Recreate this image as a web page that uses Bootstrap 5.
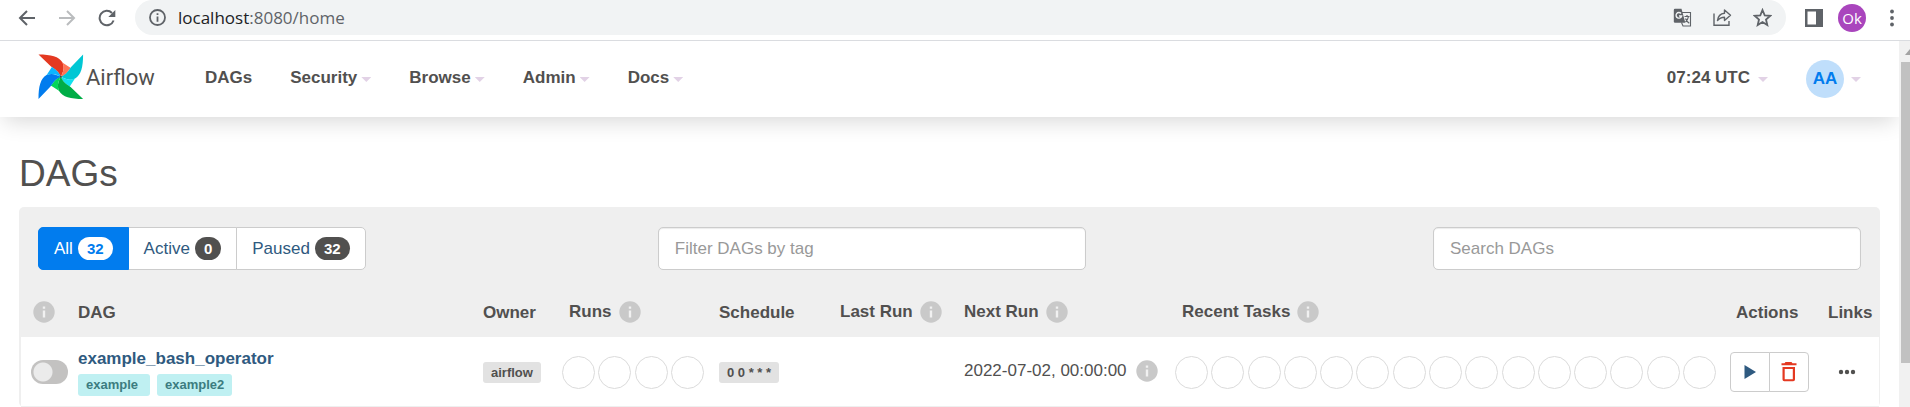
<!DOCTYPE html>
<html lang="en">
<head>
<meta charset="utf-8">
<meta name="viewport" content="width=device-width, initial-scale=1">
<title>DAGs - Airflow</title>
<link rel="stylesheet" href="https://cdn.jsdelivr.net/npm/bootstrap@5.3.0/dist/css/bootstrap.min.css">
<style>
  :root { --ink: #51504f; --blue: #017cee; --panel: #efefef; --rule: #cccccc; --link: #2f5a80; }
  html, body { height: 100%; }
  body { font-family: "Liberation Sans", Arial, sans-serif; font-size: 17px; line-height: 24px; color: var(--ink); background: #fff; overflow: hidden; }
  svg { display: block; flex: none; }

  /* browser toolbar */
  .chrome-bar { height: 41px; padding-bottom: 5px; border-bottom: 1px solid #dadce0; flex: none; }
  .chrome-btn { border: 0; background: none; padding: 0; width: 40px; height: 32px; display: flex; align-items: center; justify-content: center; color: #5f6368; }
  .chrome-nav { padding-left: 7px; }
  .address { background: #f1f3f4; border-radius: 18px; height: 35px; padding-left: 14px; }
  .url { font-family: "Open Sans", "Noto Sans", sans-serif; font-size: 17px; color: #5f6368; }
  .url b { font-weight: 400; color: #202124; }
  .profile { width: 28px; height: 28px; background: #a945bd; color: #fff; font-family: "Open Sans", sans-serif; font-size: 15px; line-height: 28px; }

  /* page and its scrollbar */
  .page { min-width: 0; overflow: hidden; }
  .scroll-track { width: 11px; background: #f1f1f1; padding: 8px 0 0 2px; }
  .scroll-thumb { background: #c1c1c1; height: 84%; margin-top: 7px; }

  .top-nav { height: 76px; padding: 0 38px 2px; background: #fff; box-shadow: 0 8px 22px -4px rgba(0, 0, 0, .16); }
  .brand { color: var(--ink); font-family: Roboto, sans-serif; font-size: 22px; gap: 2px; width: 148px; }
  .brand svg { margin-bottom: 2px; }
  .top-nav .nav-link { color: var(--ink); font-weight: 700; padding: 0 19px; display: flex; align-items: center; gap: 4px; }
  .tri { width: 10px; height: 5px; background: #e2d2e6; clip-path: polygon(0 0, 100% 0, 50% 100%); margin-top: 3px; }
  .avatar { width: 38px; height: 38px; line-height: 38px; font-size: 17px; background: #bfdefb; color: var(--blue); margin: 2px 3px 0 0; }

  .content { padding: 38px 19px 0; }
  .content h1 { font-size: 37px; line-height: 38px; margin: 0 0 14px; color: var(--ink); }
  .dag-panel { background: var(--panel); border-radius: 5px; padding: 0 1px 0 2px; }
  .tools { padding: 20px 18px 18px 17px; }
  .tools-left { width: 34%; }
  .tools-field { width: 428px; max-width: 24%; }
  .tools .form-control { font-size: 17px; line-height: 24px; height: 43px; padding: 0 16px; border: 1px solid var(--rule); border-radius: 5px; box-shadow: inset 0 1px 1px rgba(0, 0, 0, .08); }
  .tools .form-control::placeholder { color: #999; }
  .filters .btn { font-size: 17px; line-height: 24px; height: 43px; padding: 0 15px; border: 1px solid var(--rule); background: #fff; color: var(--link); border-radius: 5px; display: flex; align-items: center; gap: 5px; }
  .filters .btn.active { background: var(--blue); border-color: var(--blue); color: #fff; }
  .filters .count { background: var(--ink); color: #fff; font-size: 15px; font-weight: 700; line-height: 23px; border-radius: 12px; padding: 0 9px; }
  .filters .active .count { background: #fff; color: var(--blue); }

  .dags { table-layout: fixed; width: 100%; }
  .dags th { height: 49px; padding: 0 0 0 10px; font-weight: 700; white-space: nowrap; }
  .dags th .with-info { gap: 7px; padding-bottom: 2px; }
  .dags .info-only { padding: 0 0 2px 12px; }
  .dags td { height: 69px; padding: 2px 0 0 10px; background: #fff; white-space: nowrap; vertical-align: middle; }
  .dags tbody tr { border-bottom: 1px solid var(--panel); }
  .c-toggle { width: 47px; } .c-owner { width: 86px; } .c-runs { width: 150px; } .c-sched { width: 121px; }
  .c-last { width: 124px; } .c-next { width: 218px; } .c-tasks { width: 554px; } .c-act { width: 92px; } .c-links { width: 61px; }
  .dags .dots-cell { padding: 2px 10px 0 3px; }
  .dags .runs-cell { padding: 2px 5px 0 3px; }
  .dot { width: 33px; height: 33px; border: 1px solid #dbdbdb; border-radius: 50%; }
  .switch.form-check-input { width: 37px; height: 24px; margin: 0; float: none; display: block; border: 0; border-radius: 12px; background-color: #c3c2c1; background-image: radial-gradient(circle at 12px 12px, #ebebeb 9px, transparent 10px); background-size: 37px 24px; background-position: 0 0; }
  .dag-name { color: var(--link); font-weight: 700; text-decoration: none; line-height: 22px; }
  .date-text { gap: 9px; }
  .chip { font-size: 13px; font-weight: 700; line-height: 21px; padding: 0 8px; border-radius: 3px; background: #e2e2e2; color: var(--ink); display: inline-block; text-decoration: none; }
  .chip-tag { background: #bff0f2; color: #3c7c80; line-height: 22px; min-width: 72px; }
  .chip-row { gap: 7px; }
  .acts .btn { width: 40px; height: 40px; padding: 0; border: 1px solid var(--rule); border-radius: 4px; background: #fff; display: flex; align-items: center; justify-content: center; }
</style>
</head>
<body class="d-flex flex-column">

<svg width="0" height="0" class="position-absolute" aria-hidden="true">
  <symbol id="info" viewBox="0 0 22 22"><circle cx="11" cy="11" r="10.7" fill="#c9c9c9"/><path d="M9.8 5.5h2.4v2.3H9.8zM9.8 9.4h2.4v7H9.8z" fill="#f1f1f1"/></symbol>
</svg>

<div class="chrome-bar d-flex align-items-center">
  <div class="chrome-nav d-flex flex-shrink-0">
    <button class="chrome-btn" aria-label="Back"><svg width="18" height="18" viewBox="0 0 18 18" fill="none" stroke="currentColor" stroke-width="2"><path d="M17 9H2.5M9 2 2 9l7 7"/></svg></button>
    <button class="chrome-btn" aria-label="Forward"><svg width="18" height="18" viewBox="0 0 18 18" fill="none" stroke="#babcbe" stroke-width="2"><path d="M1 9h14.5M9 2l7 7-7 7"/></svg></button>
    <button class="chrome-btn" aria-label="Reload"><svg width="18" height="18" viewBox="0 0 18 18"><path d="M15.6 11.5A7.2 7.2 0 1 1 14 4" fill="none" stroke="currentColor" stroke-width="2"/><path d="M17.3 1v7h-7z" fill="currentColor"/></svg></button>
  </div>
  <div class="address d-flex align-items-center flex-grow-1 ms-2">
    <svg width="17" height="17" viewBox="0 0 17 17"><circle cx="8.5" cy="8.5" r="7.5" fill="none" stroke="#5f6368" stroke-width="1.8"/><path d="M7.6 4.3h1.8v1.8H7.6zM7.6 7.4h1.8v5.3H7.6z" fill="#5f6368"/></svg>
    <span class="url ms-2 ps-1 flex-grow-1"><b>localhost</b>:8080/home</span>
    <button class="chrome-btn" aria-label="Translate"><svg width="19" height="19" viewBox="0 0 19 19"><path d="M8 4.500h9.500v13.500H10l-1.500-3.500" fill="none" stroke="#5f6368" stroke-width="1.100"/><path d="M2 .8h6.500l3.800 14H2a1.200 1.200 0 0 1-1.200-1.200V2A1.200 1.200 0 0 1 2 .8z" fill="#5f6368"/><path d="M8 5.500A2.800 2.800 0 1 0 8.600 8H6" fill="none" stroke="#f1f3f4" stroke-width="1.400"/><path d="M11.500 8.500h5M14 7v1.500M15.500 8.500c-.4 2.200-1.500 4-3 5.500M12.500 10.500c.7 1.800 2 3.500 3.800 4.700" fill="none" stroke="#5f6368" stroke-width="1.200"/></svg></button>
    <button class="chrome-btn" aria-label="Share"><svg width="19" height="19" viewBox="0 0 19 19" fill="none" stroke="#5f6368" stroke-width="1.400"><path d="M1 5.500V17.300h15V13"/><path d="M11.500 2v3.200C7.500 5.500 5 8.500 4.500 12.500c2-2.500 4-3.300 7-3.300v3.300l6-5.200z" stroke-linejoin="round"/></svg></button>
    <button class="chrome-btn me-1" aria-label="Bookmark"><svg width="19" height="19" viewBox="0 0 19 19"><path d="m9.500 2 2.200 5.300 5.600.5-4.300 3.700 1.300 5.500-4.800-2.900L4.700 17 6 11.500 1.700 7.800l5.600-.5z" fill="none" stroke="#5f6368" stroke-width="1.800"/></svg></button>
  </div>
  <div class="d-flex align-items-center flex-shrink-0 ms-2">
    <button class="chrome-btn" aria-label="Side panel"><svg width="18" height="18" viewBox="0 0 18 18"><path d="M0 0h18v18H0zM2.500 2.500v13H11v-13z" fill="#5f6368" fill-rule="evenodd"/></svg></button>
    <button class="profile btn rounded-circle border-0 p-0 ms-1 me-2">Ok</button>
    <button class="chrome-btn w-auto px-3" aria-label="Menu"><svg width="4" height="18" viewBox="0 0 4 18" fill="#5f6368"><circle cx="2" cy="2.500" r="1.900"/><circle cx="2" cy="9" r="1.900"/><circle cx="2" cy="15.500" r="1.900"/></svg></button>
  </div>
</div>

<div class="d-flex flex-grow-1 overflow-hidden">
  <div class="page flex-grow-1">
    <nav class="top-nav d-flex align-items-center">
      <a class="brand d-flex align-items-center text-decoration-none" href="#">
        <svg width="46" height="46" viewBox="0 0 46 46">
          <g>
            <path d="M.5.500C13 .5 21 2.500 24.500 8.500 27 14 25 18 22.800 23 20.500 17 17 15.500 13 12.500z" fill="#e43921"/>
            <path d="M24.300 8.500 32.800 14C30 17 28.600 20.500 22.800 23 25 18 27 14 24.300 8.500z" fill="#ff7557"/>
          </g>
          <g transform="rotate(90 22.8 22.8)">
            <path d="M.5.500C13 .5 21 2.500 24.500 8.500 27 14 25 18 22.800 23 20.500 17 17 15.500 13 12.500z" fill="#00c7d4"/>
            <path d="M24.300 8.500 32.800 14C30 17 28.600 20.500 22.800 23 25 18 27 14 24.300 8.500z" fill="#11e1ee"/>
          </g>
          <g transform="rotate(180 22.8 22.8)">
            <path d="M.5.500C13 .5 21 2.500 24.500 8.500 27 14 25 18 22.800 23 20.500 17 17 15.500 13 12.500z" fill="#00ad46"/>
            <path d="M24.300 8.500 32.800 14C30 17 28.600 20.500 22.800 23 25 18 27 14 24.300 8.500z" fill="#04d659"/>
          </g>
          <g transform="rotate(270 22.8 22.8)">
            <path d="M.5.500C13 .5 21 2.500 24.500 8.500 27 14 25 18 22.800 23 20.500 17 17 15.500 13 12.500z" fill="#017cee"/>
            <path d="M24.300 8.500 32.800 14C30 17 28.600 20.500 22.800 23 25 18 27 14 24.300 8.500z" fill="#0cb6ff"/>
          </g>
          <circle cx="22.800" cy="22.800" r="1" fill="#4a4848"/>
        </svg>
        <span>Airflow</span>
      </a>
      <div class="nav flex-grow-1 flex-nowrap">
        <a class="nav-link" href="#">DAGs</a>
        <a class="nav-link" href="#">Security<span class="tri"></span></a>
        <a class="nav-link" href="#">Browse<span class="tri"></span></a>
        <a class="nav-link" href="#">Admin<span class="tri"></span></a>
        <a class="nav-link" href="#">Docs<span class="tri"></span></a>
      </div>
      <div class="nav flex-nowrap">
        <a class="nav-link" href="#"><span class="me-1">07:24 UTC</span><span class="tri"></span></a>
        <a class="nav-link pe-0" href="#"><span class="avatar rounded-circle text-center">AA</span><span class="tri"></span></a>
      </div>
    </nav>

    <main class="content">
      <h1 class="fw-normal">DAGs</h1>
      <div class="dag-panel">
        <div class="tools d-flex">
          <div class="tools-left d-flex">
            <div class="btn-group filters">
              <button class="btn active">All<span class="count">32</span></button>
              <button class="btn">Active<span class="count">0</span></button>
              <button class="btn">Paused<span class="count">32</span></button>
            </div>
          </div>
          <div class="tools-field"><input class="form-control" type="text" placeholder="Filter DAGs by tag" aria-label="Filter DAGs by tag"></div>
          <div class="tools-field ms-auto"><input class="form-control" type="text" placeholder="Search DAGs" aria-label="Search DAGs"></div>
        </div>

        <table class="dags">
          <colgroup><col class="c-toggle"><col><col class="c-owner"><col class="c-runs"><col class="c-sched"><col class="c-last"><col class="c-next"><col class="c-tasks"><col class="c-act"><col class="c-links"></colgroup>
          <thead>
            <tr>
              <th class="info-only"><svg width="22" height="22"><use href="#info"/></svg></th>
              <th>DAG</th>
              <th>Owner</th>
              <th><div class="with-info d-flex align-items-center">Runs<svg width="22" height="22"><use href="#info"/></svg></div></th>
              <th>Schedule</th>
              <th><div class="with-info d-flex align-items-center">Last Run<svg width="22" height="22"><use href="#info"/></svg></div></th>
              <th><div class="with-info d-flex align-items-center">Next Run<svg width="22" height="22"><use href="#info"/></svg></div></th>
              <th><div class="with-info d-flex align-items-center">Recent Tasks<svg width="22" height="22"><use href="#info"/></svg></div></th>
              <th>Actions</th>
              <th>Links</th>
            </tr>
          </thead>
          <tbody>
            <tr>
              <td><input class="form-check-input switch" type="checkbox" role="switch" aria-label="Pause or unpause example_bash_operator"></td>
              <td>
                <a class="dag-name d-block" href="#">example_bash_operator</a>
                <div class="chip-row d-flex mt-1"><a class="chip chip-tag" href="#">example</a><a class="chip chip-tag" href="#">example2</a></div>
              </td>
              <td><a class="chip" href="#">airflow</a></td>
              <td class="runs-cell"><div class="d-flex justify-content-between"><span class="dot"></span><span class="dot"></span><span class="dot"></span><span class="dot"></span></div></td>
              <td><a class="chip" href="#">0 0 * * *</a></td>
              <td></td>
              <td class="pt-0"><div class="date-text d-flex align-items-center">2022-07-02, 00:00:00<svg width="22" height="22"><use href="#info"/></svg></div></td>
              <td class="dots-cell"><div class="d-flex justify-content-between"><span class="dot"></span><span class="dot"></span><span class="dot"></span><span class="dot"></span><span class="dot"></span><span class="dot"></span><span class="dot"></span><span class="dot"></span><span class="dot"></span><span class="dot"></span><span class="dot"></span><span class="dot"></span><span class="dot"></span><span class="dot"></span><span class="dot"></span></div></td>
              <td class="ps-1"><div class="btn-group acts">
                <button class="btn" aria-label="Trigger DAG"><svg width="12" height="14" viewBox="0 0 12 14"><path d="M.5 0v14L12 7z" fill="#2f5a80"/></svg></button>
                <button class="btn" aria-label="Delete DAG"><svg width="16" height="20" viewBox="0 0 16 20"><path d="M4.500 0h6l1 1.200H15.500V3.200H.500V1.200H3.500zM1.500 5h12.500v12.500a1.800 1.800 0 0 1-1.800 1.800H3.300a1.800 1.800 0 0 1-1.800-1.800zM3.700 7v10.200h8.100V7z" fill="#e43921" fill-rule="evenodd"/></svg></button>
              </div></td>
              <td class="ps-0 pe-1"><a class="d-flex justify-content-center" href="#" aria-label="Links"><svg width="18" height="6" viewBox="0 0 18 6" fill="#51504f"><circle cx="3" cy="3" r="2.200"/><circle cx="9" cy="3" r="2.200"/><circle cx="15" cy="3" r="2.200"/></svg></a></td>
            </tr>
          </tbody>
        </table>
      </div>
    </main>
  </div>
  <div class="scroll-track flex-shrink-0">
    <svg width="9" height="6" viewBox="0 0 9 6"><path d="M4 6 9 0v6z" fill="#a3a3a3"/></svg>
    <div class="scroll-thumb"></div>
  </div>
</div>

<script src="https://cdn.jsdelivr.net/npm/bootstrap@5.3.0/dist/js/bootstrap.bundle.min.js"></script>
</body>
</html>
